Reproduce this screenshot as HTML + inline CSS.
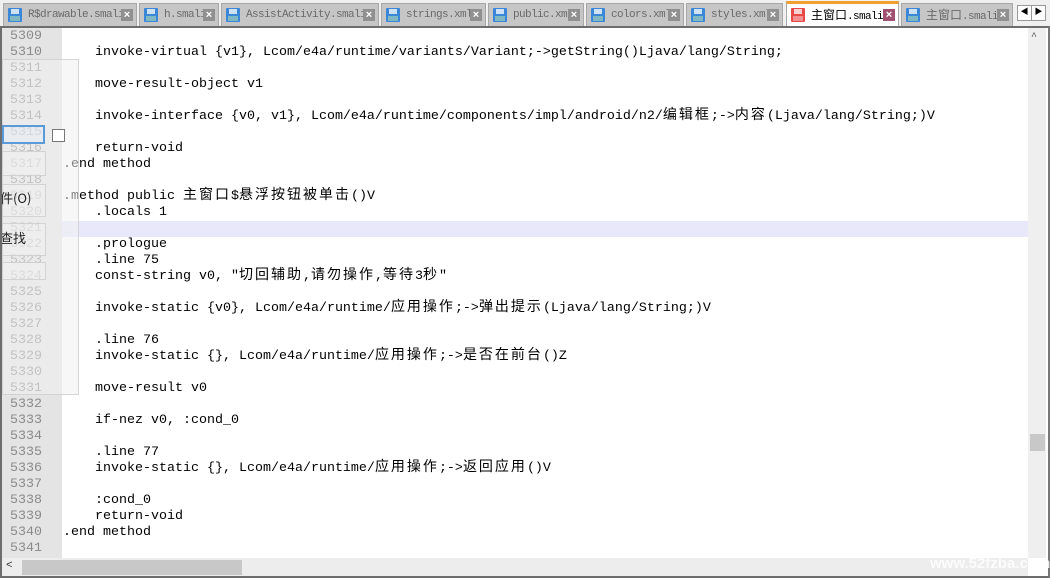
<!DOCTYPE html>
<html><head><meta charset="utf-8">
<style>
*{margin:0;padding:0;box-sizing:border-box}
html,body{width:1050px;height:578px;overflow:hidden}
body{background:#f0f0f0;position:relative;font-family:"Liberation Mono","Noto Sans CJK SC",monospace}
.tabs{position:absolute;left:0;top:0;width:1050px;height:27px;background:#f0f0f0}
.tab{position:absolute;top:3px;height:23px;background:#c6c6c6;border:1px solid #a8a8a8;border-bottom:none;font-size:11px;letter-spacing:-0.6px;color:#6a6a6a;line-height:22px;padding-left:24px;white-space:nowrap;overflow:hidden}
.tab .ic{position:absolute;left:4px;top:4px;width:14px;height:14px;background:#3a86d8;border-radius:1px}
.tab .ic:before{content:"";position:absolute;left:3px;top:1px;width:8px;height:5px;background:#cfe2f5}
.tab .ic:after{content:"";position:absolute;left:2px;top:8px;width:10px;height:5px;background:#7fb8c0}
.tab .x{position:absolute;right:3px;top:5px;width:12px;height:12px;background:#909090;color:#fff;font-size:11px;letter-spacing:0;line-height:12px;text-align:center;font-family:"Liberation Sans",sans-serif;font-weight:bold}
.tab.act{background:#fff;color:#000;border-top:3px solid #f0a030;top:1px;height:26px;line-height:22px}
.tab.act .ic{background:#e84848}
.tab.act .ic:before{background:#fbd0d0}
.tab.act .ic:after{background:#f09090}
.tab.act .x{background:#a05070}
.tc{font-family:"Noto Sans CJK SC",sans-serif;font-size:12px;letter-spacing:0}
.arr{position:absolute;top:5px;width:15px;height:16px;background:#fdfdfd;border:1px solid #999;font-size:8px;text-align:center;line-height:14px}
.ed{position:absolute;left:0;top:26px;width:1050px;height:552px;border:2px solid #6d6d6d;border-right-color:#777;background:#fff;overflow:hidden}
.gut{position:absolute;left:0;top:0;width:60px;height:530px;background:#e4e4e4}
.ln{position:absolute;left:8px;top:1px;font-size:13.33px;color:#8a8a8a;line-height:16px}
.code{position:absolute;left:61px;top:1px;font-size:13.33px;color:#000}
.code div{height:16px;line-height:16px;white-space:pre}
.c{letter-spacing:2px;font-family:"Noto Sans CJK SC",sans-serif;font-size:14px;line-height:16px;display:inline-block;height:16px;vertical-align:top;position:relative;top:-3px}
.hl{position:absolute;left:60px;top:193px;width:966px;height:16px;background:#e8e8fa}
.vs{position:absolute;left:1026px;top:0;width:18px;height:530px;background:#efefef}
.hs{position:absolute;left:0;top:530px;width:1026px;height:18px;background:#ededed}
.ov{position:absolute;background:rgba(240,240,240,0.55);border:1px solid rgba(200,200,200,0.7)}
</style></head><body>
<div class="tabs">
<div class="tab" style="left:3px;width:134px"><span class="ic"></span>R$drawable.smali<span class="x">×</span></div>
<div class="tab" style="left:139px;width:80px"><span class="ic"></span>h.smali<span class="x">×</span></div>
<div class="tab" style="left:221px;width:158px"><span class="ic"></span>AssistActivity.smali<span class="x">×</span></div>
<div class="tab" style="left:381px;width:105px"><span class="ic"></span>strings.xml<span class="x">×</span></div>
<div class="tab" style="left:488px;width:96px"><span class="ic"></span>public.xml<span class="x">×</span></div>
<div class="tab" style="left:586px;width:98px"><span class="ic"></span>colors.xml<span class="x">×</span></div>
<div class="tab" style="left:686px;width:97px"><span class="ic"></span>styles.xml<span class="x">×</span></div>
<div class="tab act" style="left:786px;width:113px"><span class="ic"></span><span class="tc">主窗口</span>.smali<span class="x">×</span></div>
<div class="tab" style="left:901px;width:112px"><span class="ic"></span><span class="tc">主窗口</span>.smali<span class="x">×</span></div>
<div class="arr" style="left:1017px">◀</div><div class="arr" style="left:1031px">▶</div>
</div>
<div class="ed">
<div class="gut"></div>
<div class="hl"></div>
<div class="ln">5309<br>5310<br>5311<br>5312<br>5313<br>5314<br>5315<br>5316<br>5317<br>5318<br>5319<br>5320<br>5321<br>5322<br>5323<br>5324<br>5325<br>5326<br>5327<br>5328<br>5329<br>5330<br>5331<br>5332<br>5333<br>5334<br>5335<br>5336<br>5337<br>5338<br>5339<br>5340<br>5341</div>
<div class="code"><div></div><div>    invoke-virtual {v1}, Lcom/e4a/runtime/variants/Variant;->getString()Ljava/lang/String;</div><div></div><div>    move-result-object v1</div><div></div><div>    invoke-interface {v0, v1}, Lcom/e4a/runtime/components/impl/android/n2/<span class="c">编辑框</span>;-><span class="c">内容</span>(Ljava/lang/String;)V</div><div></div><div>    return-void</div><div>.end method</div><div></div><div>.method public <span class="c">主窗口</span>$<span class="c">悬浮按钮被单击</span>()V</div><div>    .locals 1</div><div></div><div>    .prologue</div><div>    .line 75</div><div>    const-string v0, "<span class="c">切回辅助</span>,<span class="c">请勿操作</span>,<span class="c">等待</span>3<span class="c">秒</span>"</div><div></div><div>    invoke-static {v0}, Lcom/e4a/runtime/<span class="c">应用操作</span>;-><span class="c">弹出提示</span>(Ljava/lang/String;)V</div><div></div><div>    .line 76</div><div>    invoke-static {}, Lcom/e4a/runtime/<span class="c">应用操作</span>;-><span class="c">是否在前台</span>()Z</div><div></div><div>    move-result v0</div><div></div><div>    if-nez v0, :cond_0</div><div></div><div>    .line 77</div><div>    invoke-static {}, Lcom/e4a/runtime/<span class="c">应用操作</span>;-><span class="c">返回应用</span>()V</div><div></div><div>    :cond_0</div><div>    return-void</div><div>.end method</div><div></div></div>
<div class="vs"><div style="position:absolute;left:3px;top:4px;font-size:10px;color:#555">^</div><div style="position:absolute;left:2px;top:406px;width:15px;height:17px;background:#c8c8c8"></div></div>
<div class="hs"><div style="position:absolute;left:4px;top:2px;font-size:11px;color:#333">&lt;</div><div style="position:absolute;left:20px;top:2px;width:220px;height:15px;background:#c8c8c8"></div></div>
<div class="ov" style="left:0;top:31px;width:77px;height:336px"></div>
<div class="ov" style="left:0;top:97px;width:43px;height:19px;border:2px solid #5a9ad8;background:rgba(230,238,248,0.5)"></div>
<div style="position:absolute;left:50px;top:101px;width:13px;height:13px;border:1px solid #777;background:#fff"></div>
<div class="ov" style="left:0;top:123px;width:44px;height:25px"></div>
<div class="ov" style="left:0;top:156px;width:44px;height:33px"></div>
<div class="ov" style="left:0;top:195px;width:44px;height:33px"></div>
<div class="ov" style="left:0;top:234px;width:44px;height:18px"></div>
<div style="position:absolute;left:-2px;top:160px;font-size:13px;font-family:'Noto Sans CJK SC',sans-serif;color:#222">件(O)</div>
<div style="position:absolute;left:-2px;top:200px;font-size:13px;font-family:'Noto Sans CJK SC',sans-serif;color:#222">查找</div>
</div>
<div style="position:absolute;left:930px;top:555px;font-family:'Liberation Sans',sans-serif;font-weight:bold;font-size:15px;color:#fff;opacity:.85">www.52fzba.com</div>
</body></html>
